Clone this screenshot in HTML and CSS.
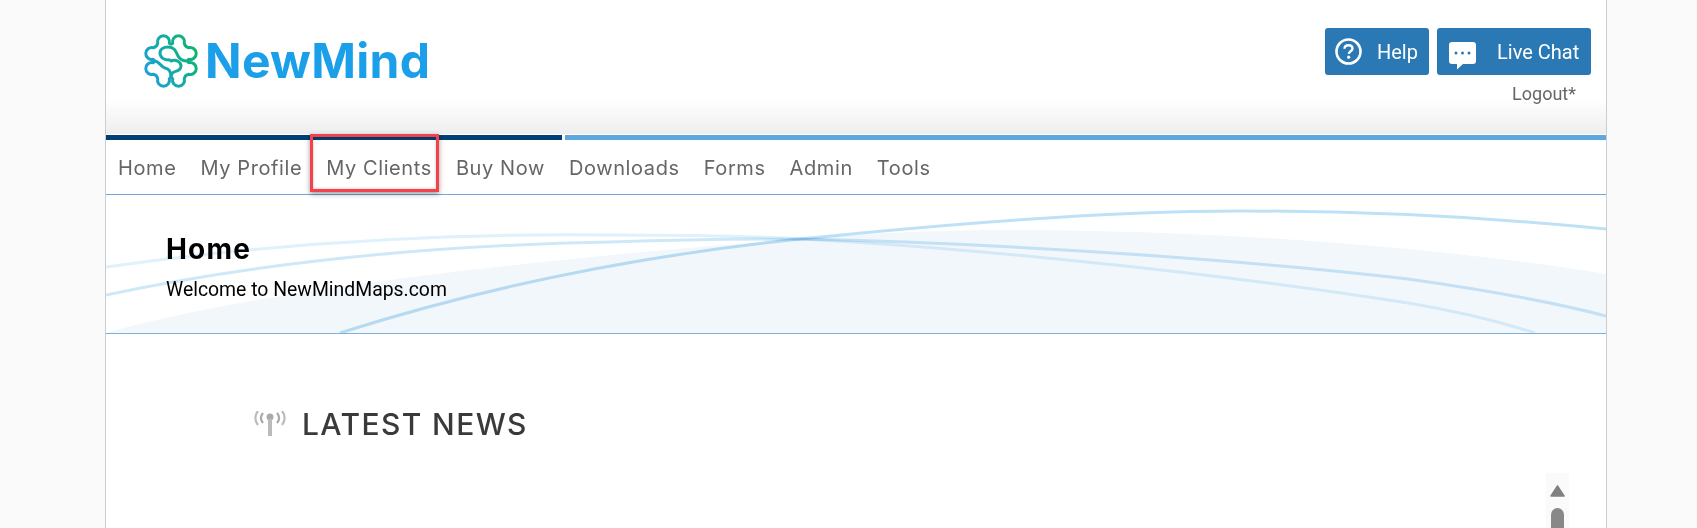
FILE: index.html
```html
<!DOCTYPE html>
<html lang="en">
<head>
<meta charset="utf-8">
<title>NewMind</title>
<link rel="stylesheet" href="styles.css">
</head>
<body>
<div class="frame">
  <header class="top">
    <a class="logo">
      <svg class="logo-mark" viewBox="0 0 54 54" fill="none" aria-hidden="true">
        <defs>
          <linearGradient id="lg" gradientUnits="userSpaceOnUse" x1="2" y1="42" x2="52" y2="18">
            <stop offset="0" stop-color="#1c9fe0"/>
            <stop offset="1" stop-color="#0db56f"/>
          </linearGradient>
        </defs>
        <g stroke="url(#lg)" stroke-width="3" stroke-linecap="round" stroke-linejoin="round">
          <path d="M28.700 9.300A6 6 0 1 1 40.300 9.300Q41 13 44.700 13.700A6 6 0 1 1 44.700 25.300Q43 27 44.700 28.700A6 6 0 1 1 44.700 40.300Q41 41 40.300 44.700A6 6 0 1 1 28.700 44.700Q27 43 25.300 44.700A6 6 0 1 1 13.700 44.700Q13 41 9.300 40.300A6 6 0 1 1 9.300 28.700Q11 27 9.300 25.300A6 6 0 1 1 9.300 13.700Q13 13 13.700 9.300A6 6 0 1 1 25.300 9.300Q27 11 28.700 9.300Z"/>
          <path d="M10.500 27C15 27 17 33 21 34C26 35 27 39 27 43"/>
          <path d="M26 26C21 26 16 24 16 19C16 15 20 13 24 13C31 13 32 18 34 22C36 26 39 27 43.500 27"/>
          <path d="M27 27C32 25 37 28 37 32C37 37 32 37 30 38C28 39 27 40 27 43"/>
        </g>
      </svg>
      <span class="logo-text">NewMind</span>
    </a>
    <div class="top-actions">
      <div class="btns">
        <a class="btn btn-help">
          <svg class="ico-help" viewBox="0 0 27 27" aria-hidden="true">
            <circle cx="13.500" cy="13.500" r="12" fill="none" stroke="#fff" stroke-width="2.600"/>
            <path d="M9.500 10.800C9.500 8.500 11.300 7.300 13.500 7.300C15.800 7.300 17.500 8.600 17.500 10.600C17.500 13.200 14 13.300 13.800 15.800" fill="none" stroke="#fff" stroke-width="2.400"/>
            <circle cx="13.700" cy="19.200" r="1.600" fill="#fff"/>
          </svg>
          <span>Help</span>
        </a>
        <a class="btn btn-chat">
          <svg class="ico-chat" viewBox="0 0 27 28" aria-hidden="true">
            <path d="M3 0H24A3 3 0 0 1 27 3V19A3 3 0 0 1 24 22H14L8 27.500V22H3A3 3 0 0 1 0 19V3A3 3 0 0 1 3 0Z" fill="#fff"/>
            <circle cx="7" cy="11" r="1.500" fill="#2a79b5"/>
            <circle cx="13.500" cy="11" r="1.500" fill="#2a79b5"/>
            <circle cx="20" cy="11" r="1.500" fill="#2a79b5"/>
          </svg>
          <span>Live Chat</span>
        </a>
      </div>
      <a class="logout">Logout*</a>
    </div>
  </header>
  <div class="bars"><div class="bar-dark"></div><div class="bar-light"></div></div>
  <nav class="nav">
    <a>Home</a><a>My Profile</a><a>My Clients</a><a>Buy Now</a><a>Downloads</a><a>Forms</a><a>Admin</a><a>Tools</a>
  </nav>
  <div class="highlight"></div>
  <section class="banner">
    <svg class="banner-art" viewBox="0 0 1500 138" preserveAspectRatio="none" aria-hidden="true">
      <path class="fill" d="M0 138C130 100 380 70 606 51C700 43 800 35 894 35C1100 35 1320 50 1500 79V138Z"/>
      <path class="l1" d="M234 138C400 85 560 58 694 44C850 28 1000 16 1134 16C1270 16 1400 24 1500 34"/>
      <path class="l2" d="M0 72C170 48 340 38 504 40C580 40 640 41 694 44C850 52 1100 76 1302 108C1350 116 1395 127 1429 138"/>
      <path class="l3" d="M0 100C170 64 340 50 504 47C570 45 640 44 694 44C900 48 1150 66 1302 84C1380 95 1450 108 1500 121"/>
    </svg>
    <div class="banner-text">
      <h1>Home</h1>
      <p>Welcome to NewMindMaps.com</p>
    </div>
  </section>
  <main class="main">
    <div class="news">
      <svg class="ico-news" viewBox="0 0 34 26" fill="none" aria-hidden="true">
        <circle cx="17" cy="6" r="3.500" fill="#aaa"/>
        <path d="M17 8V25" stroke="#bbb" stroke-width="4"/>
        <path d="M10 2C7.500 5 7.500 9 10 12M24 2C26.500 5 26.500 9 24 12" stroke="#aaa" stroke-width="2.200"/>
        <path d="M5 0C1.500 4 1.500 10 5 14M29 0C32.500 4 32.500 10 29 14" stroke="#bbb" stroke-width="2.200"/>
      </svg>
      <h2>LATEST NEWS</h2>
    </div>
    <div class="scroll">
      <svg class="scroll-up" viewBox="0 0 15 12" aria-hidden="true"><path d="M7.500 1L14 11H1Z" fill="#808080" stroke="#808080" stroke-width="1.500" stroke-linejoin="round"/></svg>
      <div class="scroll-thumb"></div>
    </div>
  </main>
</div>
</body>
</html>
```
FILE: styles.css
```css
* { box-sizing: border-box; }
html, body { margin: 0; height: 100%; overflow: hidden; background: #fafafa; }
body { font-family: Roboto, "Liberation Sans", sans-serif; }

.frame {
  position: relative;
  width: 1502px;
  height: 528px;
  margin-left: 105px;
  background: #fff;
  border-left: 1px solid #ccc;
  border-right: 1px solid #ccc;
}

.top {
  height: 135px;
  display: flex;
  justify-content: space-between;
  padding: 28px 15px 0 38px;
  background: linear-gradient(to bottom, #fff 0, #fff 100px, #eee 134px, #fff 134px);
}
.logo { display: flex; align-items: flex-start; gap: 7px; }
.logo-mark { width: 54px; height: 54px; margin-top: 6px; }
.logo-text {
  font-family: Inter, sans-serif;
  font-weight: 700;
  font-size: 48px;
  line-height: 58px;
  margin-top: 4px;
  color: #1a9fe8;
  letter-spacing: 0.300px;
}
.top-actions { display: flex; flex-direction: column; align-items: flex-end; }
.btns { display: flex; gap: 8px; }
.btn {
  display: flex;
  align-items: center;
  height: 47px;
  background: #2a79b5;
  color: #fff;
  border-radius: 3px;
  font-size: 20px;
}
.btn-help { width: 104px; padding-left: 10px; gap: 15px; }
.btn-chat { width: 154px; padding-left: 12px; gap: 21px; }
.ico-help { width: 27px; height: 27px; }
.ico-chat { width: 27px; height: 28px; margin-top: 9px; }
.logout { margin: 8px 15px 0 0; font-size: 18px; line-height: 22px; color: #666; }

.bars { display: flex; gap: 3px; height: 5px; }
.bar-dark { width: 456px; background: #003f75; }
.bar-light { flex: 1; background: #5ea6dc; }

.nav {
  display: flex;
  height: 55px;
  padding: 1px 0 0 0;
  align-items: center;
  border-bottom: 1px solid #6ea8d8;
  font-family: Inter, sans-serif;
  font-size: 20px;
  color: #666;
}
.nav a { padding: 0 12px; letter-spacing: 0.600px; }

.highlight {
  position: absolute;
  left: 204px;
  top: 134px;
  width: 129px;
  height: 58px;
  border: 3px solid #f4424a;
  box-shadow: 0 2px 5px rgba(0,0,0,.4), inset 0 0 3px rgba(0,0,0,.25);
}

.banner {
  position: relative;
  height: 139px;
  border-bottom: 1px solid #7eb2de;
  overflow: hidden;
}
.banner-art { position: absolute; inset: 0; width: 100%; height: 138px; }
.banner-art path { fill: none; stroke-width: 3; mix-blend-mode: multiply; }
.banner-art .fill { fill: #f2f7fb; stroke: none; }
.banner-art .l1 { stroke: #bfe1f6; }
.banner-art .l2 { stroke: #dff1fb; }
.banner-art .l3 { stroke: #cfe8f8; }
.banner-text { position: relative; padding: 38px 0 0 60px; }
.banner-text h1 {
  margin: 0;
  font-family: Inter, sans-serif;
  font-size: 28px;
  line-height: 32px;
  font-weight: 700;
  letter-spacing: 1.200px;
  color: #000;
}
.banner-text p { margin: 13px 0 0; font-size: 19.400px; line-height: 24px; color: #000; }

.main { display: flex; justify-content: space-between; align-items: flex-start; }
.news { display: flex; align-items: center; gap: 15px; margin: 73px 0 0 147px; filter: blur(0.5px); }
.ico-news { width: 34px; height: 26px; }
.news h2 {
  margin: 0;
  font-family: Inter, sans-serif;
  font-size: 30px;
  line-height: 34px;
  font-weight: 500;
  letter-spacing: 1.400px;
  color: #3a3a3a;
}
.scroll {
  width: 23px;
  height: 60px;
  margin: 139px 37px 0 0;
  padding: 12px 4px 0;
  background: #fafafa;
  filter: blur(0.3px);
}
.scroll-up { display: block; width: 15px; height: 12px; }
.scroll-thumb { width: 13px; height: 30px; margin: 11px 0 0 1px; background: #888; border-radius: 7px 7px 0 0; }
```
